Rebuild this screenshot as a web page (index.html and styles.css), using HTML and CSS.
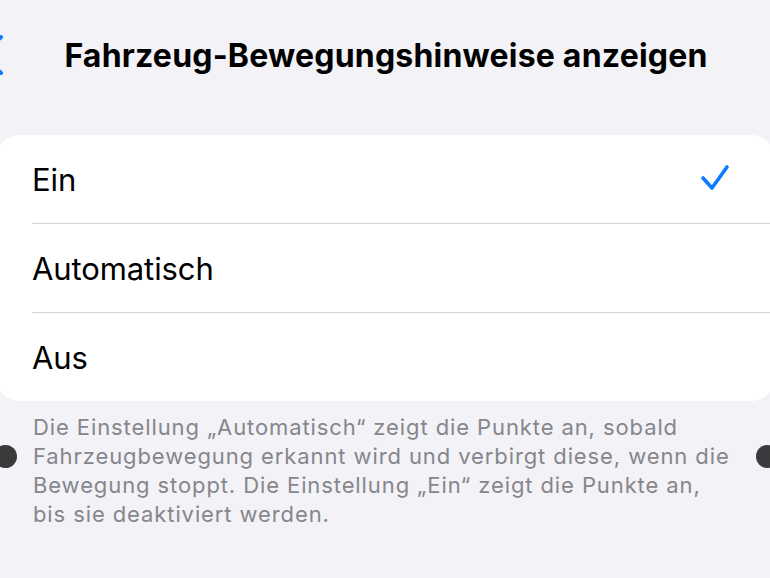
FILE: index.html
```html
<!DOCTYPE html>
<html lang="de">
<head>
    <meta charset="UTF-8">
    <title>Fahrzeug-Bewegungshinweise anzeigen</title>
    <link rel="stylesheet" href="styles.css">
</head>
<body>
    <div class="screen">
        <div class="nav">
            <svg class="back" width="24" height="44" viewBox="0 0 24 44">
                <path d="M1 4 L-17 22 L1 40" fill="none" stroke="#0a7aff" stroke-width="4" stroke-linecap="round" stroke-linejoin="round"/>
            </svg>
            <h1>Fahrzeug-Bewegungshinweise anzeigen</h1>
        </div>

        <div class="card">
            <div class="row">
                <span>Ein</span>
                <svg class="check" width="30" height="28" viewBox="0 0 30 28">
                    <path d="M3 14 L12 24 L27 3" fill="none" stroke="#0a7aff" stroke-width="3.6" stroke-linecap="round" stroke-linejoin="round"/>
                </svg>
            </div>
            <div class="row">
                <span>Automatisch</span>
            </div>
            <div class="row">
                <span>Aus</span>
            </div>
        </div>

        <div class="footer">
            <span class="dot dot-left"></span>
            <p>Die Einstellung „Automatisch“ zeigt die Punkte an, sobald Fahrzeugbewegung erkannt wird und verbirgt diese, wenn die Bewegung stoppt. Die Einstellung „Ein“ zeigt die Punkte an, bis sie deaktiviert werden.</p>
            <span class="dot dot-right"></span>
        </div>
    </div>
</body>
</html>
```

FILE: styles.css
```css
html, body {
    margin: 0;
    background: #f2f2f7;
}

body {
    font-family: Inter, "Noto Sans", sans-serif;
    color: #000;
    width: 770px;
    height: 578px;
    overflow: hidden;
}

.screen {
    position: relative;
}

.nav {
    position: relative;
    height: 110px;
    display: flex;
    justify-content: center;
    align-items: center;
}

.nav h1 {
    margin: 0;
    font-size: 32px;
    font-weight: 700;
    letter-spacing: 0.2px;
    padding-left: 2px;
}

.back {
    position: absolute;
    left: 0;
    top: 33px;
}

.card {
    margin: 25px -4px 0 -3px;
    background: #fff;
    border-radius: 22px;
}

.row {
    height: 88px;
    margin-left: 35px;
    padding-right: 44px;
    display: flex;
    align-items: center;
    justify-content: space-between;
    border-bottom: 1px solid #d5d5d8;
    font-size: 31px;
    letter-spacing: -0.1px;
}

.row:last-child {
    border-bottom: none;
}

.check {
    margin-top: -2px;
}

.footer {
    position: relative;
    padding: 12px 30px 0 33px;
}

.footer p {
    margin: 0;
    color: #86868b;
    font-size: 22px;
    line-height: 29px;
    letter-spacing: 0.9px;
}

.dot {
    position: absolute;
    top: 44px;
    width: 23px;
    height: 23px;
    border-radius: 50%;
    background: #3a3a3c;
}

.dot-left {
    left: -6px;
}

.dot-right {
    left: 756px;
}
```
